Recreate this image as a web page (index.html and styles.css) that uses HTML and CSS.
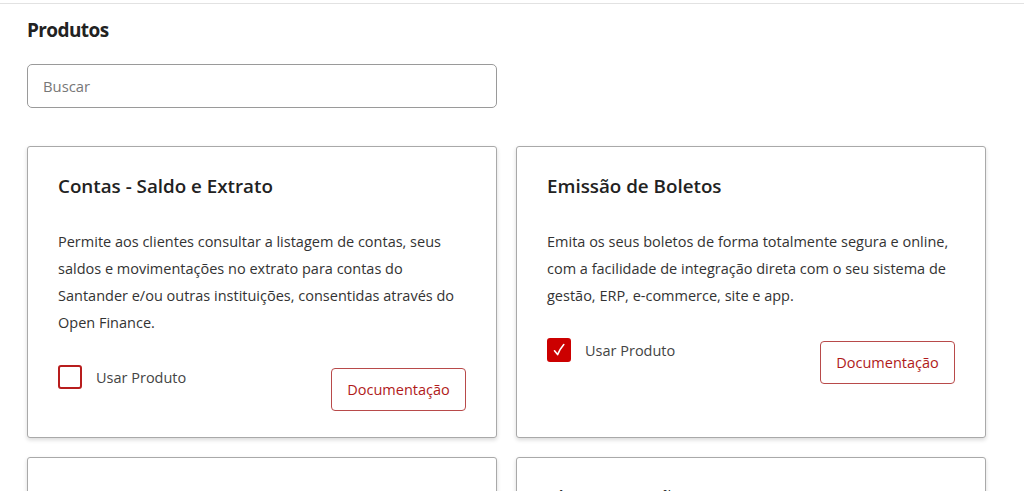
FILE: index.html
```html
<!DOCTYPE html>
<html lang="pt-BR">
  <head>
    <meta charset="UTF-8" />
    <meta name="viewport" content="width=device-width, initial-scale=1.0" />
    <title>Produtos</title>
    <link rel="stylesheet" href="styles.css">
  </head>
  <body>
    <div class="topbar"></div>

    <main>
      <h1>Produtos</h1>

      <input class="search" type="text" placeholder="Buscar" />

      <div class="products">
        <div class="product">
          <h2>Contas - Saldo e Extrato</h2>
          <p>
            Permite aos clientes consultar a listagem de contas, seus saldos e
            movimentações no extrato para contas do Santander e/ou outras
            instituições, consentidas através do Open Finance.
          </p>
          <div class="product-actions">
            <label class="use">
              <span class="checkbox"></span>
              Usar Produto
            </label>
            <button>Documentação</button>
          </div>
        </div>

        <div class="product">
          <h2>Emissão de Boletos</h2>
          <p>
            Emita os seus boletos de forma totalmente segura e online, com a
            facilidade de integração direta com o seu sistema de gestão, ERP,
            e-commerce, site e app.
          </p>
          <div class="product-actions">
            <label class="use">
              <span class="checkbox checked">
                <svg viewBox="0 0 24 24" width="24" height="24">
                  <path d="M7.5 12.8 L10.6 16.6 Q13 11 16.8 6.6" fill="none" stroke="#fff" stroke-width="1.6" stroke-linecap="round" stroke-linejoin="round" />
                </svg>
              </span>
              Usar Produto
            </label>
            <button>Documentação</button>
          </div>
        </div>

        <div class="product">
          <h2>Pagamentos</h2>
          <p>
            Realize pagamentos de boletos, tributos e concessionárias de forma
            automatizada e segura.
          </p>
          <div class="product-actions">
            <label class="use">
              <span class="checkbox"></span>
              Usar Produto
            </label>
            <button>Documentação</button>
          </div>
        </div>

        <div class="product">
          <h2>Pix - Transações</h2>
          <p>
            Consulte, envie e receba transações Pix de forma simples e
            integrada ao seu sistema.
          </p>
          <div class="product-actions">
            <label class="use">
              <span class="checkbox"></span>
              Usar Produto
            </label>
            <button>Documentação</button>
          </div>
        </div>
      </div>
    </main>
  </body>
</html>
```

FILE: styles.css
```css
* {
  margin: 0;
  padding: 0;
  box-sizing: border-box;
  font-family: "Open Sans", "Liberation Sans", sans-serif;
}
body {
  background-color: #fff;
  color: #333;
}
.topbar {
  height: 4px;
  border-bottom: 1px solid #e2e2e2;
}
main {
  padding: 13px 0 40px 27px;
  width: 986px;
}
h1 {
  font-size: 19px;
  font-weight: 700;
  line-height: 26px;
  color: #222;
  letter-spacing: -0.6px;
}
.search {
  display: block;
  width: 470px;
  height: 44px;
  margin-top: 21px;
  padding: 0 15px;
  border: 1px solid #9a9a9a;
  border-radius: 5px;
  font-size: 14.8px;
  color: #333;
}
.search::placeholder {
  color: #777;
}
.products {
  display: grid;
  grid-template-columns: 470px 470px;
  gap: 19px;
  margin-top: 38px;
}
.product {
  border: 1px solid #a9a9a9;
  border-radius: 3px;
  padding: 27px 30px 26px;
  box-shadow: 0 2px 4px rgba(0, 0, 0, 0.15);
  background: #fff;
}
.product h2 {
  font-size: 18.8px;
  font-weight: 600;
  line-height: 25px;
  color: #222;
}
.product p {
  margin-top: 29px;
  font-size: 14.5px;
  line-height: 27px;
  color: #333;
}
.product-actions {
  display: flex;
  justify-content: space-between;
  align-items: flex-start;
  margin-top: 29px;
}
.use {
  display: flex;
  align-items: center;
  gap: 14px;
  font-size: 14.5px;
  color: #444;
  cursor: pointer;
}
.checkbox {
  width: 24px;
  height: 24px;
  border: 2px solid #b81d1d;
  border-radius: 3px;
  display: flex;
}
.checkbox.checked {
  background: #cc0000;
  border-color: #cc0000;
}
.checkbox svg {
  margin: -2px;
}
button {
  margin-top: 3px;
  width: 135px;
  height: 43px;
  background: #fff;
  border: 1px solid #b84a4a;
  border-radius: 4px;
  color: #b01a1a;
  font-size: 14.5px;
  cursor: pointer;
}
```
